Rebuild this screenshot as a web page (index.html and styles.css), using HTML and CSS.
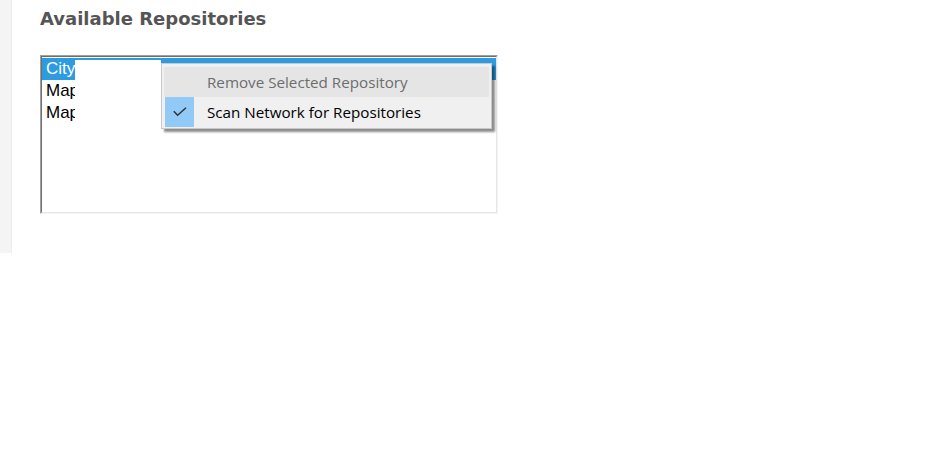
FILE: index.html
```html
<!DOCTYPE html>
<html>
<head>
<meta charset="utf-8">
<link rel="stylesheet" href="styles.css">
</head>
<body>
<div class="page">
  <div class="rail"></div>
  <div class="content">
    <h2 class="title">Available Repositories</h2>
    <div class="listbox">
      <div class="listbox-inner">
        <div class="row selected">City</div>
        <div class="row">Map</div>
        <div class="row">Map</div>
      </div>
      <div class="redact"></div>
      <div class="menu">
        <div class="item hover disabled"><span class="gutter"></span><span class="label">Remove Selected Repository</span></div>
        <div class="item"><span class="gutter checked"><svg width="14" height="10" viewBox="0 0 14 10"><path d="M0.8 4.2 L4.6 8.2 L13 0.8" fill="none" stroke="#333333" stroke-width="1.5"/></svg></span><span class="label">Scan Network for Repositories</span></div>
      </div>
    </div>
  </div>
</div>
</body>
</html>
```
FILE: styles.css
```css
html, body {
  margin: 0;
  padding: 0;
  background: #ffffff;
}
.page {
  display: flex;
  align-items: flex-start;
}
.rail {
  width: 11px;
  height: 253px;
  background: #f4f4f4;
  border-right: 1px solid #ececec;
  flex: none;
}
.content {
  padding-left: 28px;
}
.title {
  margin: 0;
  padding-top: 7px;
  font-family: "DejaVu Sans", Verdana, sans-serif;
  font-weight: 700;
  font-size: 18px;
  line-height: 24px;
  color: #555555;
}
.listbox {
  position: relative;
  margin-top: 24px;
  width: 456px;
  height: 157px;
  border: 1px solid;
  border-color: #a0a0a0 #f3f3f3 #f3f3f3 #a0a0a0;
}
.listbox-inner {
  border: 1px solid;
  border-color: #6f6f6f #e6e6e6 #e6e6e6 #6f6f6f;
  background: #ffffff;
  padding-top: 1px;
  box-sizing: border-box;
  height: 157px;
}
.row {
  height: 22px;
  line-height: 21px;
  padding-left: 4px;
  font-family: "Liberation Sans", Arial, sans-serif;
  font-size: 17px;
  color: #000000;
}
.row.selected {
  background: #2c9be0;
  color: #ffffff;
}
.redact {
  position: absolute;
  left: 34px;
  top: 4px;
  width: 86px;
  height: 70px;
  background: #ffffff;
}
.menu {
  position: absolute;
  left: 120px;
  top: 7px;
  width: 325px;
  padding: 3px 2px 1px 2px;
  background: #f0f0f0;
  border: 1px solid #c9c9c9;
  box-shadow: 3px 3px 2px rgba(0, 0, 0, 0.45);
  font-family: "Open Sans", sans-serif;
  font-size: 15.2px;
}
.item {
  display: flex;
  align-items: center;
  height: 30px;
}
.item.hover {
  background: #e5e5e5;
}
.item.disabled .label {
  color: #6d6d6d;
}
.gutter {
  width: 29px;
  height: 30px;
  margin-left: 1px;
  display: flex;
  align-items: center;
  justify-content: center;
}
.gutter.checked {
  background: #91c9f7;
}
.label {
  margin-left: 13px;
  color: #000000;
}
```
